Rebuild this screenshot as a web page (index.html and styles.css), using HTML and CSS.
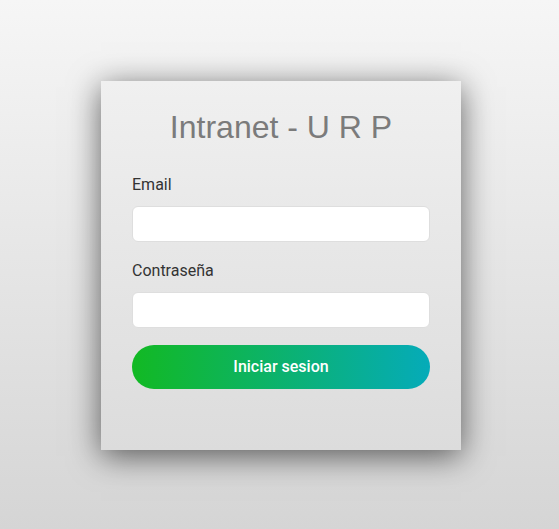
FILE: index.html
```html
<!DOCTYPE html>
<html lang="es">
<head>
<meta charset="utf-8">
<title>Intranet - U R P</title>
<link rel="stylesheet" href="styles.css">
</head>
<body>
<main class="page">
  <div class="card">
    <h1 class="title">Intranet - U R P</h1>
    <form class="form">
      <label class="label" for="email">Email</label>
      <input class="input" id="email" type="email">
      <label class="label" for="pass">Contraseña</label>
      <input class="input" id="pass" type="password">
      <button class="btn" type="button">Iniciar sesion</button>
    </form>
  </div>
</main>
</body>
</html>
```
FILE: styles.css
```css
html, body {
  margin: 0;
  padding: 0;
  height: 100%;
}
body {
  background: linear-gradient(to bottom, #f6f6f6 0%, #d5d5d5 100%);
  font-family: Roboto, "Liberation Sans", sans-serif;
}
.page {
  box-sizing: border-box;
  min-height: 100vh;
  display: flex;
  align-items: center;
  justify-content: center;
  padding-left: 3px;
  padding-top: 1px;
}
.card {
  box-sizing: border-box;
  width: 360px;
  height: 369px;
  padding: 28px 31px 0;
  background: linear-gradient(to bottom, #f0f0f0 0%, #dcdcdc 100%);
  box-shadow: 0 6px 30px rgba(0, 0, 0, 0.6);
}
.title {
  margin: 0;
  font-family: "Liberation Sans", Arial, sans-serif;
  font-weight: normal;
  font-size: 32px;
  line-height: 37px;
  color: #7b7b7b;
  text-align: center;
}
.form {
  margin-top: 29px;
  display: flex;
  flex-direction: column;
}
.label {
  font-size: 16px;
  line-height: 19px;
  color: #333333;
  margin-bottom: 12px;
}
.input {
  box-sizing: border-box;
  height: 36px;
  width: 100%;
  margin: 0 0 19px;
  border: 1px solid #dedede;
  border-radius: 6px;
  background: #ffffff;
  outline: none;
}
.input:last-of-type {
  margin-bottom: 17px;
}
.btn {
  height: 44px;
  width: 100%;
  border: none;
  border-radius: 22px;
  background: linear-gradient(to right, #12b923 0%, #05abb9 100%);
  color: #ffffff;
  font-family: Roboto, "Liberation Sans", sans-serif;
  font-size: 16px;
  font-weight: 500;
  cursor: pointer;
}
```
